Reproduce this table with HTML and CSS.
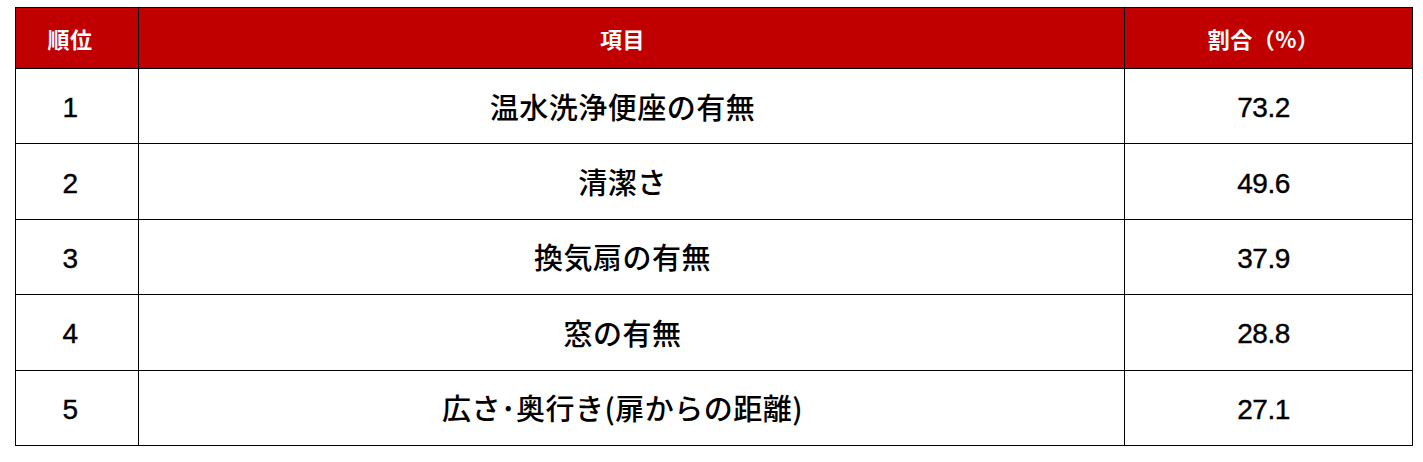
FILE: index.html
```html
<!DOCTYPE html>
<html lang="ja">
<head>
<meta charset="utf-8">
<link rel="stylesheet" href="styles.css">
</head>
<body>
<div class="wrap">
  <div class="table">
    <div class="cell head c1">順位</div>
    <div class="cell head c2">項目</div>
    <div class="cell head c3">割合（%）</div>

    <div class="cell num c1">1</div>
    <div class="cell c2">温水洗浄便座の有無</div>
    <div class="cell num c3">73.2</div>

    <div class="cell num c1">2</div>
    <div class="cell c2">清潔さ</div>
    <div class="cell num c3">49.6</div>

    <div class="cell num c1">3</div>
    <div class="cell c2">換気扇の有無</div>
    <div class="cell num c3">37.9</div>

    <div class="cell num c1">4</div>
    <div class="cell c2">窓の有無</div>
    <div class="cell num c3">28.8</div>

    <div class="cell num c1">5</div>
    <div class="cell c2">広さ･奥行き(扉からの距離)</div>
    <div class="cell num c3">27.1</div>
  </div>
</div>
</body>
</html>
```

FILE: styles.css
```css
html, body {
  margin: 0;
  padding: 0;
  background: #ffffff;
}

.wrap {
  padding: 7px 0 0 15px;
}

.table {
  display: grid;
  grid-template-columns: 123px 986px 288px;
  grid-template-rows: 61px repeat(5, 75.4px);
  width: max-content;
  border-top: 1px solid #000;
  border-left: 1px solid #000;
  font-family: "Noto Sans CJK JP", "Liberation Sans", sans-serif;
}

.cell {
  box-sizing: border-box;
  border-right: 1px solid #000;
  border-bottom: 1px solid #000;
  display: flex;
  align-items: center;
  justify-content: center;
  color: #000;
  font-size: 29px;
  font-weight: 500;
  line-height: 1;
  letter-spacing: 0.5px;
}

.num {
  font-family: "Liberation Sans", "Noto Sans CJK JP", sans-serif;
  font-size: 28px;
  font-weight: 400;
  letter-spacing: -0.5px;
  padding-top: 4px;
  color: #000;
  -webkit-text-stroke: 0.4px #000;
}

.head {
  background: #c00000;
  color: #fff;
  font-weight: 700;
  font-size: 22px;
}

.c1 {
  padding-right: 14px;
}

.c2 {
  padding-right: 18px;
}

.c3 {
  padding-right: 10px;
}
```
